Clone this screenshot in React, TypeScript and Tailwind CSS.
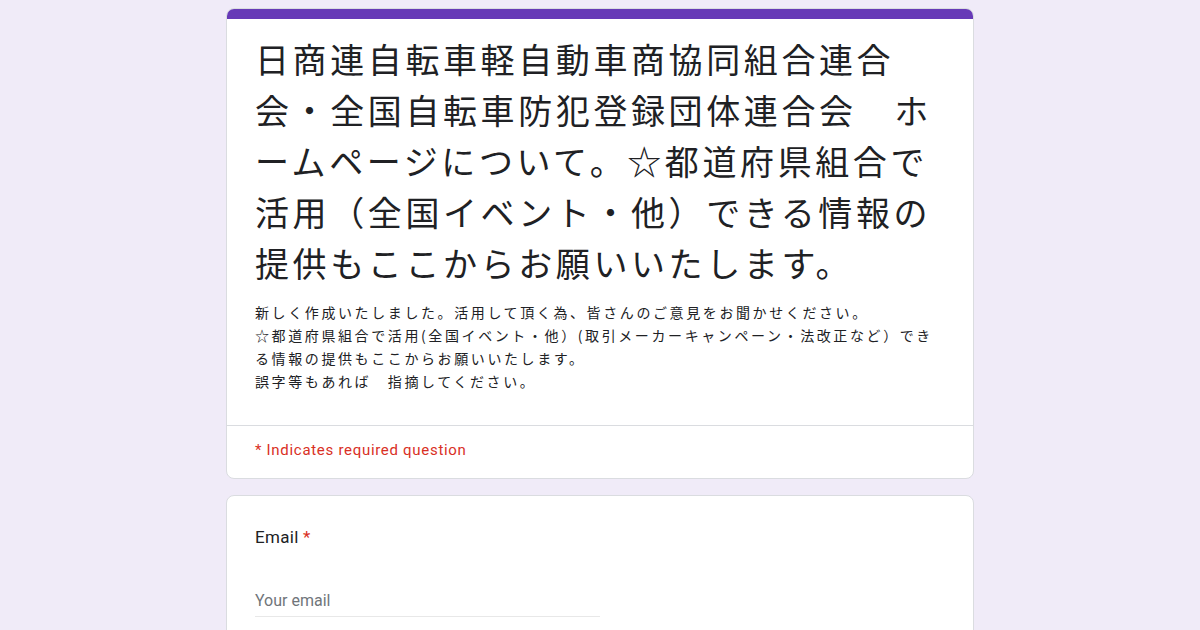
const jp = { fontFamily: '"Noto Sans CJK JP", "Noto Sans", sans-serif' }
const roboto = { fontFamily: 'Roboto, "Noto Sans CJK JP", sans-serif' }

export default function App() {
  return (
    <div className="min-h-[630px] w-full bg-[#f0ebf8] pt-2" style={jp}>
      <div className="mx-auto w-[748px] flex flex-col gap-4">
        {/* header card */}
        <div className="bg-white rounded-lg border border-[#dadce0] overflow-hidden">
          <div className="h-[10px] bg-[#673ab7]" />
          <div className="pl-[28px] pr-6 pt-[14px] pb-[32px]">
            <h1 className="text-[34px] leading-[51px] tracking-[3.6px] text-[#202124] font-normal">
              日商連自転車軽自動車商協同組合連合会・全国自転車防犯登録団体連合会　ホームページについて。☆都道府県組合で活用（全国イベント・他）できる情報の提供もここからお願いいたします。
            </h1>
            <div className="mt-[13px] text-[14px] leading-[23px] tracking-[2.6px] text-[#202124]">
              <p>新しく作成いたしました。活用して頂く為、皆さんのご意見をお聞かせください。</p>
              <p>☆都道府県組合で活用(全国イベント・他）(取引メーカーキャンペーン・法改正など）できる情報の提供もここからお願いいたします。</p>
              <p>誤字等もあれば　指摘してください。</p>
            </div>
          </div>
          <div className="border-t border-[#dadce0] pl-[28px] pr-6 pt-[13px] pb-[17px] text-[15px] leading-[22px] tracking-[0.7px] text-[#d93025]" style={roboto}>
            * Indicates required question
          </div>
        </div>

        {/* email card */}
        <div className="bg-white rounded-lg border border-[#dadce0] pl-[28px] pr-6 pt-[29px] pb-8">
          <div className="text-[17px] leading-[24px] tracking-[0.3px] text-[#202124]" style={roboto}>
            Email <span className="text-[#d93025]">*</span>
          </div>
          <div className="mt-[41px] w-[345px] border-b border-[#e8e8e8] pb-[4px] text-[16px] leading-[22px] text-[#70757a]" style={roboto}>
            Your email
          </div>
        </div>
      </div>
    </div>
  )
}
